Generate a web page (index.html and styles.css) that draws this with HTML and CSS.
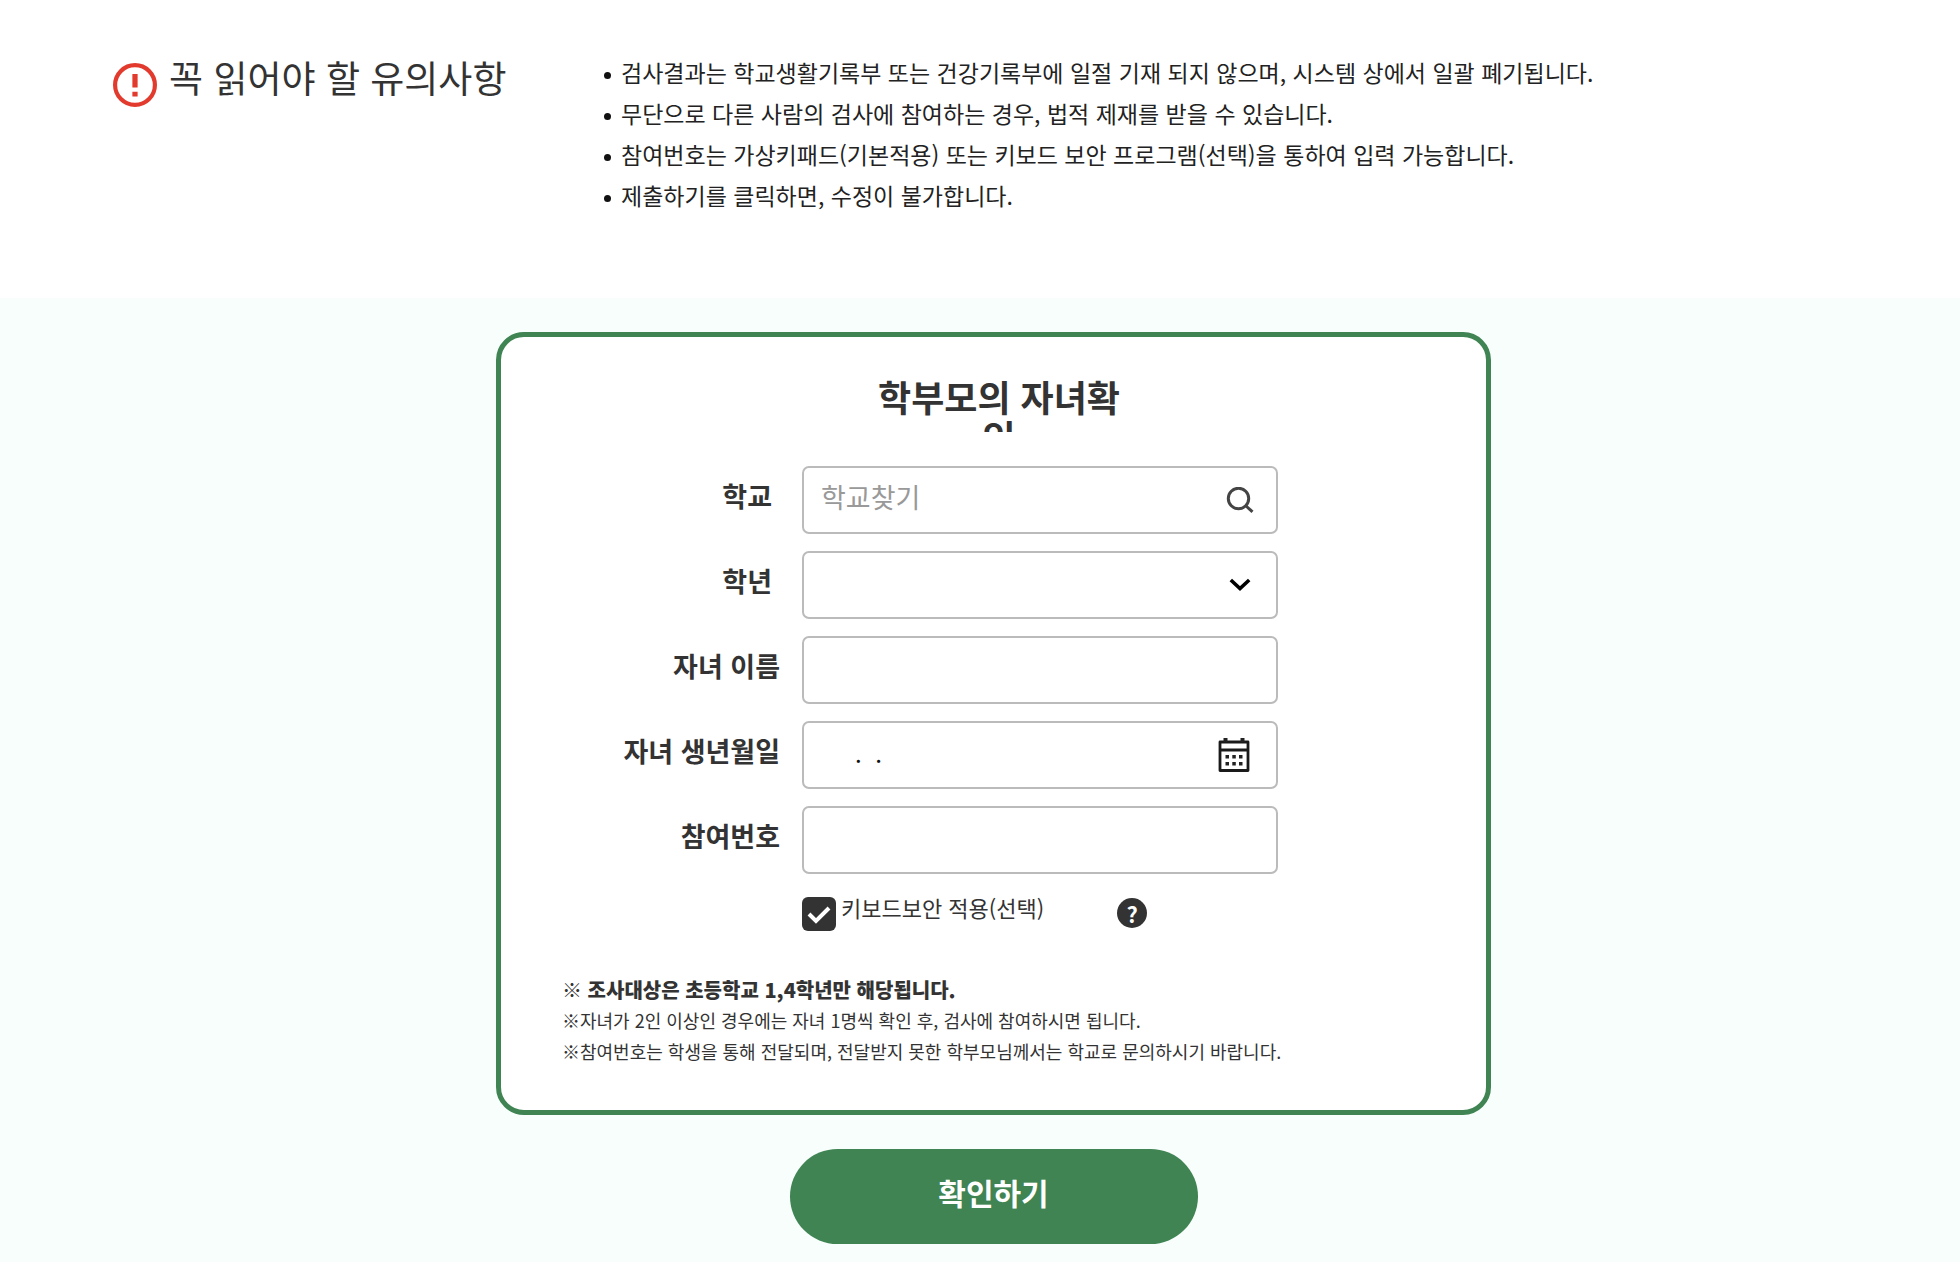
FILE: index.html
```html
<!DOCTYPE html>
<html lang="ko">
<head>
<meta charset="utf-8">
<meta name="viewport" content="width=device-width, initial-scale=1">
<title>학부모의 자녀확인</title>
<link rel="stylesheet" href="styles.css">
</head>
<body>
<section class="notice">
  <h1 class="notice-title">
    <svg class="notice-icon" viewBox="0 0 42 42" aria-hidden="true">
      <circle cx="21" cy="21" r="19" fill="none" stroke="#e23b2e" stroke-width="4"/>
      <path d="M21 10.500v13M21 27.500v4.500" fill="none" stroke="#e23b2e" stroke-width="5"/>
    </svg>
    <span>꼭 읽어야 할 유의사항</span>
  </h1>
  <ul class="notice-list">
    <li>검사결과는 학교생활기록부 또는 건강기록부에 일절 기재 되지 않으며, 시스템 상에서 일괄 폐기됩니다.</li>
    <li>무단으로 다른 사람의 검사에 참여하는 경우, 법적 제재를 받을 수 있습니다.</li>
    <li>참여번호는 가상키패드(기본적용) 또는 키보드 보안 프로그램(선택)을 통하여 입력 가능합니다.</li>
    <li>제출하기를 클릭하면, 수정이 불가합니다.</li>
  </ul>
</section>
<main class="main">
  <form class="form">
    <div class="card">
      <h2 class="card-title">학부모의 자녀확인</h2>
      <div class="rows">
        <label class="label label-short" for="school">학교</label>
        <div class="field">
          <input class="control" id="school" type="text" placeholder="학교찾기">
          <button class="icon-button" type="button" aria-label="학교찾기">
            <svg width="28" height="26" viewBox="0 0 28 26" fill="none" stroke="#444" stroke-width="3"><circle cx="12.500" cy="11.500" r="10.200"/><path d="M19.500 18.500l7 6.300"/></svg>
          </button>
        </div>
        <label class="label label-short" for="grade">학년</label>
        <div class="field">
          <select class="control" id="grade"><option></option></select>
          <svg class="chevron" width="22" height="14" viewBox="0 0 22 14" fill="none" stroke="#000" stroke-width="3.600"><path d="M1.800 2l9.200 8.600L20.200 2"/></svg>
        </div>
        <label class="label" for="child">자녀 이름</label>
        <div class="field"><input class="control" id="child" type="text"></div>
        <label class="label" for="birth">자녀 생년월일</label>
        <div class="field">
          <input class="control control-date" id="birth" type="text" value=".  .">
          <button class="icon-button icon-calendar" type="button" aria-label="날짜 선택">
            <svg width="32" height="34" viewBox="0 0 32 34"><path d="M2 4h28v28.500H2zM2 12h28" fill="none" stroke="#1a1a1a" stroke-width="2.800" stroke-linejoin="round"/><path d="M5.500 0h4v4h-4zM22.500 0h4v4h-4zM7.500 17h3.500v3.500H7.500zM14.300 17h3.500v3.500h-3.500zM21 17h3.500v3.500H21zM7.500 24h3.500v3.500H7.500zM14.300 24h3.500v3.500h-3.500zM21 24h3.500v3.500H21z" fill="#222"/></svg>
          </button>
        </div>
        <label class="label" for="code">참여번호</label>
        <div class="field"><input class="control" id="code" type="text"></div>
      </div>
      <div class="security">
        <input class="check" id="keyboard" type="checkbox" checked>
        <label class="check-label" for="keyboard">키보드보안 적용(선택)</label>
        <button class="help" type="button" aria-label="도움말">?</button>
      </div>
      <div class="notes">
        <p class="note-strong">※ 조사대상은 초등학교 1,4학년만 해당됩니다.</p>
        <p>※자녀가 2인 이상인 경우에는 자녀 1명씩 확인 후, 검사에 참여하시면 됩니다.</p>
        <p>※참여번호는 학생을 통해 전달되며, 전달받지 못한 학부모님께서는 학교로 문의하시기 바랍니다.</p>
      </div>
    </div>
    <button class="submit" type="submit">확인하기</button>
  </form>
</main>
</body>
</html>
```
FILE: styles.css
```css
* { box-sizing: border-box; }

body {
  margin: 0;
  min-height: 100vh;
  display: flex;
  flex-direction: column;
  background: #fff;
  color: #333;
  font-family: "Noto Sans CJK KR", "Noto Sans", sans-serif;
}

h1, h2, p, ul { margin: 0; padding: 0; }
button, input, select { font-family: inherit; }

.notice {
  display: grid;
  grid-template-columns: 491px 1fr;
  padding: 52px 113px 82px;
}

.notice-title {
  display: flex;
  align-items: flex-start;
  gap: 12px;
  font-size: 37px;
  font-weight: 400;
  line-height: 50px;
}

.notice-icon {
  width: 44px;
  height: 44px;
  margin-top: 11px;
}

.notice-list {
  list-style: none;
  color: #222;
  font-size: 23px;
  line-height: 41px;
}

.notice-list li {
  display: flex;
  gap: 10px;
}

.notice-list li::before {
  content: "";
  flex: none;
  width: 7px;
  height: 7px;
  margin-top: 20px;
  border-radius: 50%;
  background: #111;
}

.main {
  flex: 1;
  padding: 34px 0 19px 27px;
  background: #f7fefc;
}

.form {
  display: flex;
  flex-direction: column;
  align-items: center;
  gap: 34px;
}

.card {
  width: 100%;
  max-width: 995px;
  padding: 39px 61px 43px;
  border: 5px solid #3f8452;
  border-radius: 28px;
  background: #fff;
}

.card-title {
  width: 252px;
  height: 56px;
  margin: 0 auto 34px 311px;
  overflow: hidden;
  font-size: 36px;
  font-weight: 700;
  line-height: 40px;
  text-align: center;
}

.rows {
  display: grid;
  grid-template-columns: 218px 476px;
  gap: 17px 22px;
}

.label {
  padding-top: 10px;
  font-size: 27px;
  font-weight: 700;
  line-height: 40px;
  text-align: right;
}

.label-short { padding-right: 8px; }

.field {
  display: grid;
  align-items: center;
  height: 68px;
  border: 2px solid #bbb;
  border-radius: 7px;
}

.field > * { grid-area: 1 / 1; }

.control {
  appearance: none;
  width: 100%;
  height: 64px;
  padding: 0 64px 8px 17px;
  border: 0;
  border-radius: 5px;
  background: transparent;
  color: #111;
  font-size: 27px;
}

.control::placeholder { color: #999; opacity: 1; }

.control-date {
  padding-left: 51px;
  padding-bottom: 6px;
  font-size: 24px;
}

.icon-button {
  display: flex;
  justify-self: end;
  margin-right: 22px;
  padding: 0;
  border: 0;
  background: none;
}

.icon-calendar { margin-right: 26px; }

.chevron {
  justify-self: end;
  margin-right: 25px;
  pointer-events: none;
}

.security {
  display: flex;
  align-items: flex-start;
  margin: 23px 0 0 240px;
}

.check {
  appearance: none;
  width: 34px;
  height: 34px;
  margin: 0 5px 0 0;
  border-radius: 6px;
  background: #333 url("data:image/svg+xml,%3Csvg xmlns='http://www.w3.org/2000/svg' viewBox='0 0 34 34'%3E%3Cpath d='M7 17l7 7 13-13' fill='none' stroke='white' stroke-width='4'/%3E%3C/svg%3E");
}

.check-label {
  font-size: 22px;
  line-height: 20px;
}

.help {
  width: 30px;
  height: 30px;
  margin: 1px 0 0 73px;
  padding: 0;
  border: 0;
  border-radius: 50%;
  background: #333;
  color: #fff;
  font-size: 22px;
  font-weight: 700;
  line-height: 30px;
}

.notes {
  margin-top: 43px;
  font-size: 18px;
  line-height: 31px;
}

.note-strong {
  font-size: 20px;
  font-weight: 900;
}

.submit {
  width: 408px;
  height: 95px;
  padding: 0 0 10px;
  border: 0;
  border-radius: 48px;
  background: #3f8452;
  color: #fff;
  font-size: 30px;
  font-weight: 700;
}
```
